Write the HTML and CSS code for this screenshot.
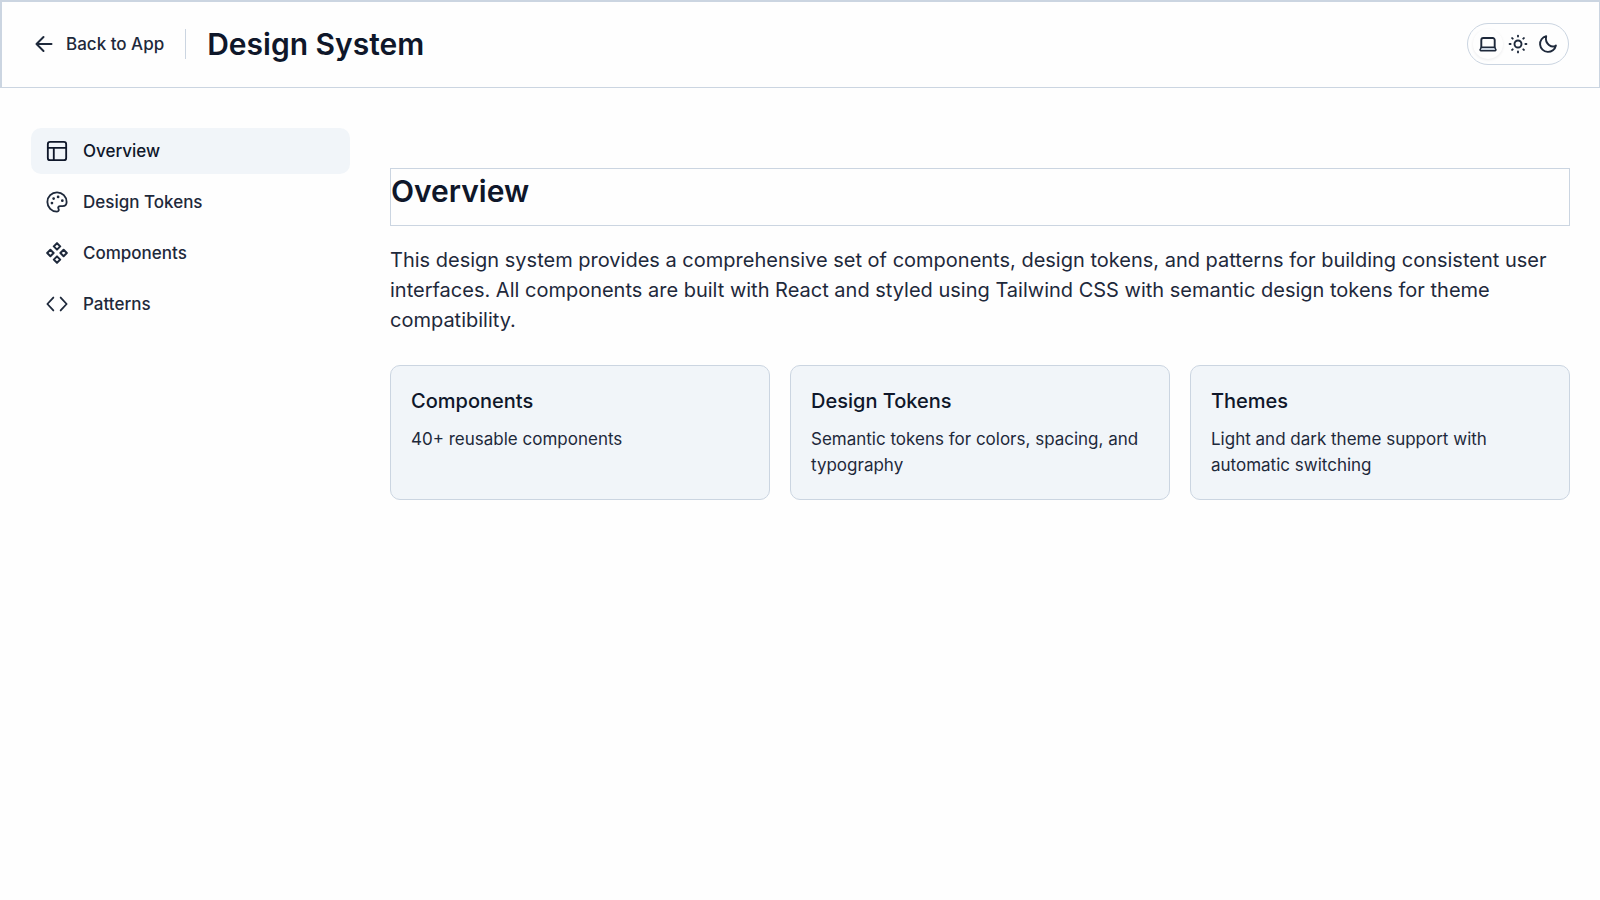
FILE: index.html
```html
<!DOCTYPE html>
<html lang="en">
<head>
<meta charset="utf-8">
<meta name="viewport" content="width=device-width, initial-scale=1">
<title>Design System</title>
<link rel="stylesheet" href="styles.css">
</head>
<body>
<header class="header">
  <div class="header-start">
    <a class="back" href="#">
      <svg class="icon icon-back" viewBox="0 0 24 24" aria-hidden="true"><path d="M11.500 5 4.500 12l7 7M4.500 12h15"/></svg>
      <span>Back to App</span>
    </a>
    <span class="divider"></span>
    <h1 class="title">Design System</h1>
  </div>
  <div class="themes" role="group" aria-label="Theme">
    <button class="theme theme-active" type="button" aria-label="System" aria-pressed="true">
      <svg class="icon icon-theme" viewBox="0 0 20 20" aria-hidden="true"><path d="M3.300 13.200V6a2 2 0 0 1 2-2h9.400a2 2 0 0 1 2 2v7.200"/><path class="laptop-base" d="M3.300 13.200h13.400l1.100 2.300a.8.800 0 0 1-.8 1.200H3a.8.800 0 0 1-.8-1.200Z"/></svg>
    </button>
    <button class="theme" type="button" aria-label="Light" aria-pressed="false">
      <svg class="icon icon-theme" viewBox="0 0 20 20" aria-hidden="true"><circle cx="10" cy="10" r="3.500"/><path d="M10 1.600v1M10 17.400v1M1.600 10h1M17.400 10h1M4.100 4.100l.6.600M15.300 15.300l.6.600M15.900 4.100l-.6.600M4.700 15.300l-.6.600"/></svg>
    </button>
    <button class="theme" type="button" aria-label="Dark" aria-pressed="false">
      <svg class="icon icon-theme" viewBox="0 0 20 20" aria-hidden="true"><path d="M8.200 2.100A8 8 0 1 0 17.900 11.500C14 14.500 6.500 10 8.200 2.100Z"/></svg>
    </button>
  </div>
</header>
<div class="layout">
  <nav class="sidebar" aria-label="Sections">
    <a class="nav-item nav-active" href="#overview" aria-current="page">
      <svg class="icon icon-nav" viewBox="0 0 24 24" aria-hidden="true"><rect x="2" y="2" width="20" height="20" rx="2.500"/><path d="M2 8.500h20M8.500 8.500V22"/></svg>
      <span>Overview</span>
    </a>
    <a class="nav-item" href="#tokens">
      <svg class="icon icon-nav" viewBox="0 0 24 24" aria-hidden="true"><path d="M12 22.500a10.500 10.500 0 1 1 10.500-10.500c0 3-2 4.500-4.500 4.500h-2.500c-2 0-2.700 1.500-1.900 2.800.900 1.500.200 3.200-1.600 3.200Z"/><path class="dots" d="M6.500 13.200h.01M8.300 8.200h.01M13.200 6.500h.01M17.800 10.500h.01"/></svg>
      <span>Design Tokens</span>
    </a>
    <a class="nav-item" href="#components">
      <svg class="icon icon-nav icon-strong" viewBox="0 0 24 24" aria-hidden="true"><path d="m12 1.300 3.500 3.500L12 8.300 8.500 4.800ZM12 15.700l3.500 3.500-3.500 3.500-3.500-3.500ZM4.800 8.500 8.300 12l-3.500 3.500L1.300 12ZM19.200 8.500l3.500 3.500-3.500 3.500-3.500-3.500Z"/></svg>
      <span>Components</span>
    </a>
    <a class="nav-item" href="#patterns">
      <svg class="icon icon-nav" viewBox="0 0 24 24" aria-hidden="true"><path d="m8 5-6.500 7L8 19M16 5l6.500 7-6.500 7"/></svg>
      <span>Patterns</span>
    </a>
  </nav>
  <main class="content" id="overview">
    <h2 class="section-title">Overview</h2>
    <p class="lead">This design system provides a comprehensive set of components, design tokens, and patterns for building consistent user interfaces. All components are built with React and styled using Tailwind CSS with semantic design tokens for theme compatibility.</p>
    <div class="cards">
      <section class="card">
        <h3 class="card-title">Components</h3>
        <p class="card-text">40+ reusable components</p>
      </section>
      <section class="card">
        <h3 class="card-title">Design Tokens</h3>
        <p class="card-text">Semantic tokens for colors, spacing, and typography</p>
      </section>
      <section class="card">
        <h3 class="card-title">Themes</h3>
        <p class="card-text">Light and dark theme support with automatic switching</p>
      </section>
    </div>
  </main>
</div>
</body>
</html>
```
FILE: styles.css
```css
*, *::before, *::after { box-sizing: border-box; }

body {
  margin: 0;
  background: #fefefe;
  color: #1e293b;
  font-family: Inter, "Open Sans", sans-serif;
  font-size: 17px;
  line-height: 26px;
}

h1, h2, h3, p { margin: 0; }

a { color: inherit; text-decoration: none; }

.icon {
  flex: none;
  fill: none;
  stroke: currentColor;
  stroke-width: 2;
  stroke-linecap: round;
  stroke-linejoin: round;
}

.header {
  display: flex;
  align-items: center;
  justify-content: space-between;
  padding: 21px 30px 22px;
  border: 1px solid #cbd5e1;
  border-top-width: 2px;
  border-left-width: 2px;
}

.header-start { display: flex; align-items: center; gap: 21px; }

.back { display: flex; align-items: center; gap: 10px; font-weight: 500; }

.icon-back { width: 24px; height: 24px; }

.divider { width: 1px; height: 30px; background: #cbd5e1; }

.title {
  color: #0f172a;
  font-size: 30px;
  font-weight: 600;
  line-height: 40px;
}

.themes {
  display: flex;
  padding: 5px;
  border: 1px solid #cbd5e1;
  border-radius: 21px;
}

.theme {
  display: grid;
  place-items: center;
  width: 30px;
  height: 30px;
  padding: 0;
  border: 0;
  border-radius: 50%;
  background: none;
  color: #1e293b;
}

.theme-active { box-shadow: 0 1px 3px rgb(15 23 42 / 8%); }

.icon-theme { width: 20px; height: 20px; stroke-width: 1.9; }

.laptop-base { fill: #cbd5e1; stroke-width: 1.5; }

.layout {
  display: grid;
  grid-template-columns: 319px minmax(0, 1fr);
  gap: 40px;
  padding: 40px 30px 40px 31px;
}

.sidebar { display: flex; flex-direction: column; gap: 5px; }

.nav-item {
  display: flex;
  align-items: center;
  gap: 15px;
  padding: 10px 15px;
  border-radius: 10px;
  font-weight: 500;
}

.nav-active { background: #f1f5f9; color: #0f172a; }

.icon-nav { width: 22px; height: 22px; }

.dots { stroke-width: 3; }

.icon-strong { stroke-width: 2.2; }

.content { padding-top: 40px; }

.section-title {
  padding: 2px 0 14px;
  border: 1px solid #cbd5e1;
  color: #0f172a;
  font-size: 30px;
  font-weight: 600;
  line-height: 40px;
}

.lead { margin-top: 19px; font-size: 20px; line-height: 30px; }

.cards {
  display: grid;
  grid-template-columns: repeat(3, minmax(0, 1fr));
  gap: 20px;
  margin-top: 30px;
}

.card {
  padding: 20px;
  border: 1px solid #cbd5e1;
  border-radius: 10px;
  background: #f1f5f9;
}

.card-title {
  margin-bottom: 10px;
  color: #0f172a;
  font-size: 20px;
  font-weight: 500;
  line-height: 30px;
}

.card-text { padding-bottom: 1px; }
```
